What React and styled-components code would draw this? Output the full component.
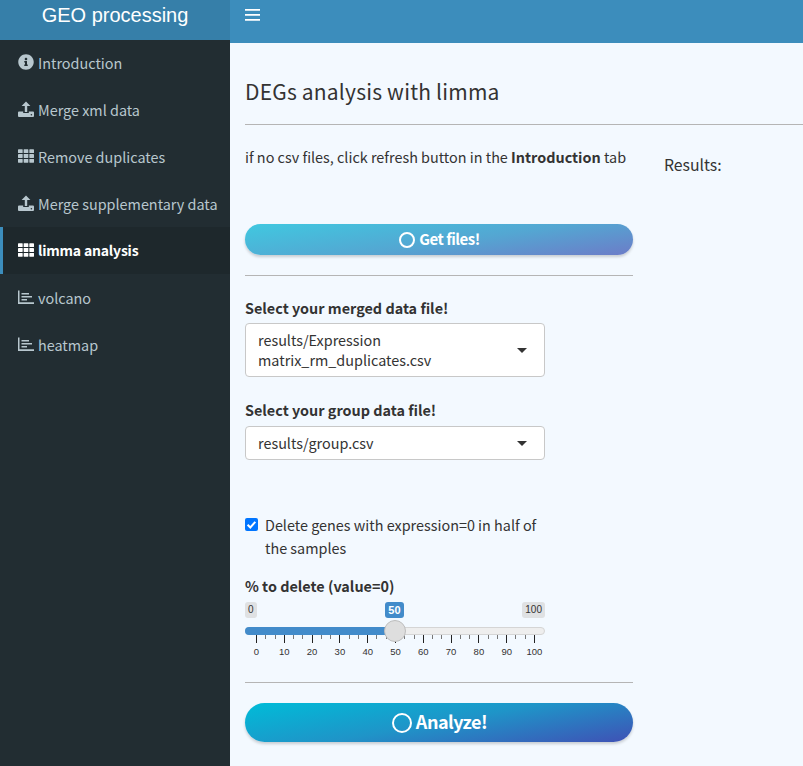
import React from "react";
import styled, { createGlobalStyle } from "styled-components";
import { FaInfoCircle } from "react-icons/fa";

const GlobalStyle = createGlobalStyle`
  html, body { margin: 0; padding: 0; height: 100%; }
  body {
    font-family: "Noto Sans CJK SC", "Open Sans", sans-serif;
    font-size: 14.4px;
    color: #333;
    background: #f3f9ff;
    overflow: hidden;
  }
`;

function AxisBars() {
  return (
    <svg viewBox="0 0 16 16" fill="currentColor">
      <path d="M0 1.5h1.5v11.8H16V15H0z" />
      <path d="M3.5 4h7.5v1.6H3.5zM3.5 7h10.5v1.6H3.5zM3.5 10h5.5v1.6H3.5z" />
    </svg>
  );
}

function UploadTray() {
  return (
    <svg viewBox="0 0 16 16" fill="currentColor">
      <path d="M8 0.5l4.4 4.6H9.2v6H6.8v-6H3.6z" />
      <path
        fillRule="evenodd"
        d="M1 10.5h4.2v1.6h5.6v-1.6H15a1 1 0 0 1 1 1V15a1 1 0 0 1-1 1H1a1 1 0 0 1-1-1v-3.5a1 1 0 0 1 1-1zM13.4 13a.8.8 0 1 0 0 1.6.8.8 0 0 0 0-1.6z"
      />
    </svg>
  );
}

function GridTable() {
  const xs = [0, 5.67, 11.33];
  const ys = [1.25, 6.08, 10.92];
  return (
    <svg viewBox="0 0 16 16" fill="currentColor">
      {ys.map((y) =>
        xs.map((x) => <rect key={`${x}-${y}`} x={x} y={y} width="4.67" height="3.83" rx="0.4" />)
      )}
    </svg>
  );
}

function Hamburger() {
  return (
    <svg viewBox="0 0 15 12" fill="currentColor">
      <path d="M0 0h15v1.7H0zM0 5h15v1.7H0zM0 10h15v1.7H0z" />
    </svg>
  );
}

const menu = [
  { label: "Introduction", icon: FaInfoCircle },
  { label: "Merge xml data", icon: UploadTray },
  { label: "Remove duplicates", icon: GridTable },
  { label: "Merge supplementary data", icon: UploadTray },
  { label: "limma analysis", icon: GridTable, active: true },
  { label: "volcano", icon: AxisBars },
  { label: "heatmap", icon: AxisBars },
];

const ticks = [0, 10, 20, 30, 40, 50, 60, 70, 80, 90, 100];

export default function App() {
  return (
    <Page>
      <GlobalStyle />
      <Sidebar>
        <Brand>GEO processing</Brand>
        <Menu>
          {menu.map((item) => (
            <MenuItem key={item.label} $active={item.active}>
              <item.icon />
              <span>{item.label}</span>
            </MenuItem>
          ))}
        </Menu>
      </Sidebar>
      <Main>
        <Navbar>
          <Hamburger />
        </Navbar>
        <Content>
          <Title>DEGs analysis with limma</Title>
          <Rule />
          <Columns>
            <FormColumn>
              <Hint>
                if no csv files, click refresh button in the <b>Introduction</b> tab
              </Hint>
              <GradientButton>
                <Ring />
                <ButtonText>Get files!</ButtonText>
              </GradientButton>
              <ShortRule />
              <Label>Select your merged data file!</Label>
              <Select $tall>
                <span>results/Expression matrix_rm_duplicates.csv</span>
                <Caret />
              </Select>
              <Label $second>Select your group data file!</Label>
              <Select>
                <span>results/group.csv</span>
                <Caret />
              </Select>
              <CheckRow>
                <CheckBox>
                  <svg viewBox="0 0 13 13" width="13" height="13">
                    <path d="M2.6 6.8l2.7 2.7 5-5.6" fill="none" stroke="#fff" strokeWidth="2" />
                  </svg>
                </CheckBox>
                <span>Delete genes with expression=0 in half of the samples</span>
              </CheckRow>
              <SliderLabel>% to delete (value=0)</SliderLabel>
              <Slider>
                <Bubbles>
                  <MinMax>0</MinMax>
                  <ValueBubble>50</ValueBubble>
                  <MinMax>100</MinMax>
                </Bubbles>
                <Track>
                  <Fill />
                  <Knob />
                </Track>
                <Grid>
                  {ticks.map((t, i) => (
                    <React.Fragment key={t}>
                      <TickCell>
                        <MajorTick />
                        <TickText>{t}</TickText>
                      </TickCell>
                      {i < ticks.length - 1 &&
                        [0, 1].map((m) => (
                          <TickCell key={m}>
                            <MinorTick />
                          </TickCell>
                        ))}
                    </React.Fragment>
                  ))}
                </Grid>
              </Slider>
              <ShortRule $bottom />
              <GradientButton $big>
                <Ring $big />
                <ButtonText>Analyze!</ButtonText>
              </GradientButton>
            </FormColumn>
            <ResultColumn>Results:</ResultColumn>
          </Columns>
        </Content>
      </Main>
    </Page>
  );
}

const Page = styled.div`
  display: flex;
  width: 803px;
  height: 766px;
  overflow: hidden;
`;

const Sidebar = styled.aside`
  flex: 0 0 230px;
  background: #222d32;
`;

const Brand = styled.div`
  height: 40px;
  background: #367fa9;
  color: #fff;
  font-family: "Liberation Sans", Arial, sans-serif;
  font-size: 20px;
  line-height: 30px;
  text-align: center;
`;

const Menu = styled.nav`
  display: flex;
  flex-direction: column;
  margin-top: -1px;
`;

const MenuItem = styled.div`
  height: 47px;
  box-sizing: border-box;
  display: flex;
  align-items: center;
  gap: 4px;
  padding-left: ${(p) => (p.$active ? "15px" : "18px")};
  padding-bottom: 1px;
  border-left: ${(p) => (p.$active ? "3px solid #3c8dbc" : "none")};
  background: ${(p) => (p.$active ? "#1e282c" : "transparent")};
  color: ${(p) => (p.$active ? "#fff" : "#b8c7ce")};
  font-size: ${(p) => (p.$active ? "14px" : "14.4px")};
  letter-spacing: ${(p) => (p.$active ? "-0.2px" : "0")};
  font-weight: ${(p) => (p.$active ? 600 : 400)};
  white-space: nowrap;
  svg {
    width: 16px;
    height: 16px;
    flex: none;
  }
`;

const Main = styled.main`
  flex: 1;
  min-width: 0;
`;

const Navbar = styled.header`
  height: 43px;
  box-sizing: border-box;
  background: #3c8dbc;
  color: #fff;
  padding: 0 0 13px 15px;
  display: flex;
  align-items: center;
  svg {
    width: 15px;
    height: 12px;
  }
`;

const Content = styled.div`
  padding-left: 15px;
`;

const Title = styled.h2`
  margin: 32px 0 0;
  font-size: 21px;
  font-weight: 400;
  line-height: 32px;
  letter-spacing: 0.2px;
  color: #333;
`;

const Rule = styled.hr`
  border: 0;
  border-top: 1px solid #b5b5b5;
  margin: 17px 0 0;
`;

const Columns = styled.div`
  display: flex;
`;

const FormColumn = styled.div`
  width: 388px;
  flex: none;
`;

const ResultColumn = styled.div`
  margin: 28px 0 0 31px;
  font-size: 15.8px;
  line-height: 24px;
`;

const Hint = styled.p`
  margin: 20px 0 0;
  font-size: 14.4px;
  line-height: 24px;
  white-space: nowrap;
  b {
    font-weight: 700;
  }
`;

const GradientButton = styled.div`
  height: ${(p) => (p.$big ? "39px" : "31px")};
  margin-top: ${(p) => (p.$big ? "20px" : "55px")};
  border-radius: 20px;
  display: flex;
  align-items: center;
  justify-content: center;
  gap: 4px;
  color: #fff;
  font-size: ${(p) => (p.$big ? "18px" : "15px")};
  letter-spacing: -0.5px;
  font-weight: 600;
  background: ${(p) =>
    p.$big
      ? "linear-gradient(170deg, #00bcd8 0%, #1f94c8 50%, #3f51b5 100%)"
      : "linear-gradient(172deg, #40c8e0 0%, #54a6d2 55%, #6c7cc8 100%)"};
  box-shadow: 0 2px 3px rgba(0, 0, 0, 0.18);
`;

const ButtonText = styled.span`
  margin-bottom: 3px;
`;

const Ring = styled.span`
  display: block;
  box-sizing: border-box;
  width: ${(p) => (p.$big ? "20px" : "16px")};
  height: ${(p) => (p.$big ? "20px" : "16px")};
  margin-left: 1px;
  border: 2px solid #fff;
  border-radius: 50%;
`;

const ShortRule = styled.hr`
  border: 0;
  border-top: 1px solid #b5b5b5;
  margin: 0;
  margin-top: ${(p) => (p.$bottom ? "24px" : "20px")};
`;

const Label = styled.div`
  margin-top: ${(p) => (p.$second ? "23px" : "22px")};
  margin-bottom: ${(p) => (p.$second ? "6px" : "5px")};
  font-weight: 700;
  font-size: 14.4px;
  line-height: 20px;
`;

const Select = styled.div`
  width: 300px;
  box-sizing: border-box;
  height: ${(p) => (p.$tall ? "54px" : "34px")};
  background: #fff;
  border: 1px solid #c8c8c8;
  border-radius: 4px;
  display: flex;
  align-items: center;
  justify-content: space-between;
  padding: 0 17px 0 12px;
  font-size: 14.4px;
  line-height: 20px;
  span {
    width: 200px;
  }
`;

const Caret = styled.i`
  display: block;
  width: 0;
  height: 0;
  border-left: 5px solid transparent;
  border-right: 5px solid transparent;
  border-top: 5px solid #333;
`;

const CheckRow = styled.div`
  display: flex;
  gap: 7px;
  margin-top: 53px;
  width: 300px;
  font-size: 14.4px;
  line-height: 23px;
`;

const CheckBox = styled.div`
  flex: none;
  width: 13px;
  height: 13px;
  margin-top: 5px;
  border-radius: 2px;
  background: #0075ff;
  display: flex;
`;

const SliderLabel = styled.div`
  margin-top: 17px;
  font-weight: 700;
  font-size: 14.4px;
  line-height: 20px;
`;

const Slider = styled.div`
  width: 300px;
  margin-top: 6px;
`;

const Bubbles = styled.div`
  display: flex;
  justify-content: space-between;
  align-items: flex-start;
  font-family: "Liberation Sans", Arial, sans-serif;
  font-size: 10px;
  line-height: 16px;
  height: 16px;
`;

const MinMax = styled.span`
  padding: 0 3px;
  background: #dfe1e3;
  border-radius: 3px;
  color: #333;
`;

const ValueBubble = styled.span`
  padding: 0 3px;
  background: #428bca;
  border-radius: 3px;
  color: #fff;
  font-weight: 700;
  margin-left: 10px;
  font-size: 11px;
`;

const Track = styled.div`
  position: relative;
  height: 8px;
  margin-top: 9px;
  background: #eee;
  border: 1px solid #d5d5d5;
  box-sizing: border-box;
  border-radius: 4px;
`;

const Fill = styled.div`
  position: absolute;
  left: -1px;
  top: -1px;
  bottom: -1px;
  width: 150px;
  background: #428bca;
  border-radius: 4px 0 0 4px;
`;

const Knob = styled.div`
  position: absolute;
  left: 138px;
  top: -8px;
  width: 22px;
  height: 22px;
  box-sizing: border-box;
  border-radius: 50%;
  background: #dedede;
  border: 1px solid #bdbdbd;
`;

const Grid = styled.div`
  display: flex;
  justify-content: space-between;
  margin: 0 10px 0 11px;
`;

const TickCell = styled.div`
  width: 1px;
  display: flex;
  flex-direction: column;
  align-items: center;
`;

const MajorTick = styled.i`
  display: block;
  flex: none;
  width: 1px;
  height: 8px;
  background: #222;
`;

const MinorTick = styled.i`
  display: block;
  flex: none;
  width: 1px;
  height: 4px;
  background: #777;
`;

const TickText = styled.span`
  margin-top: 3px;
  font-family: "Liberation Sans", Arial, sans-serif;
  font-size: 9.5px;
  line-height: 12px;
  color: #333;
`;
